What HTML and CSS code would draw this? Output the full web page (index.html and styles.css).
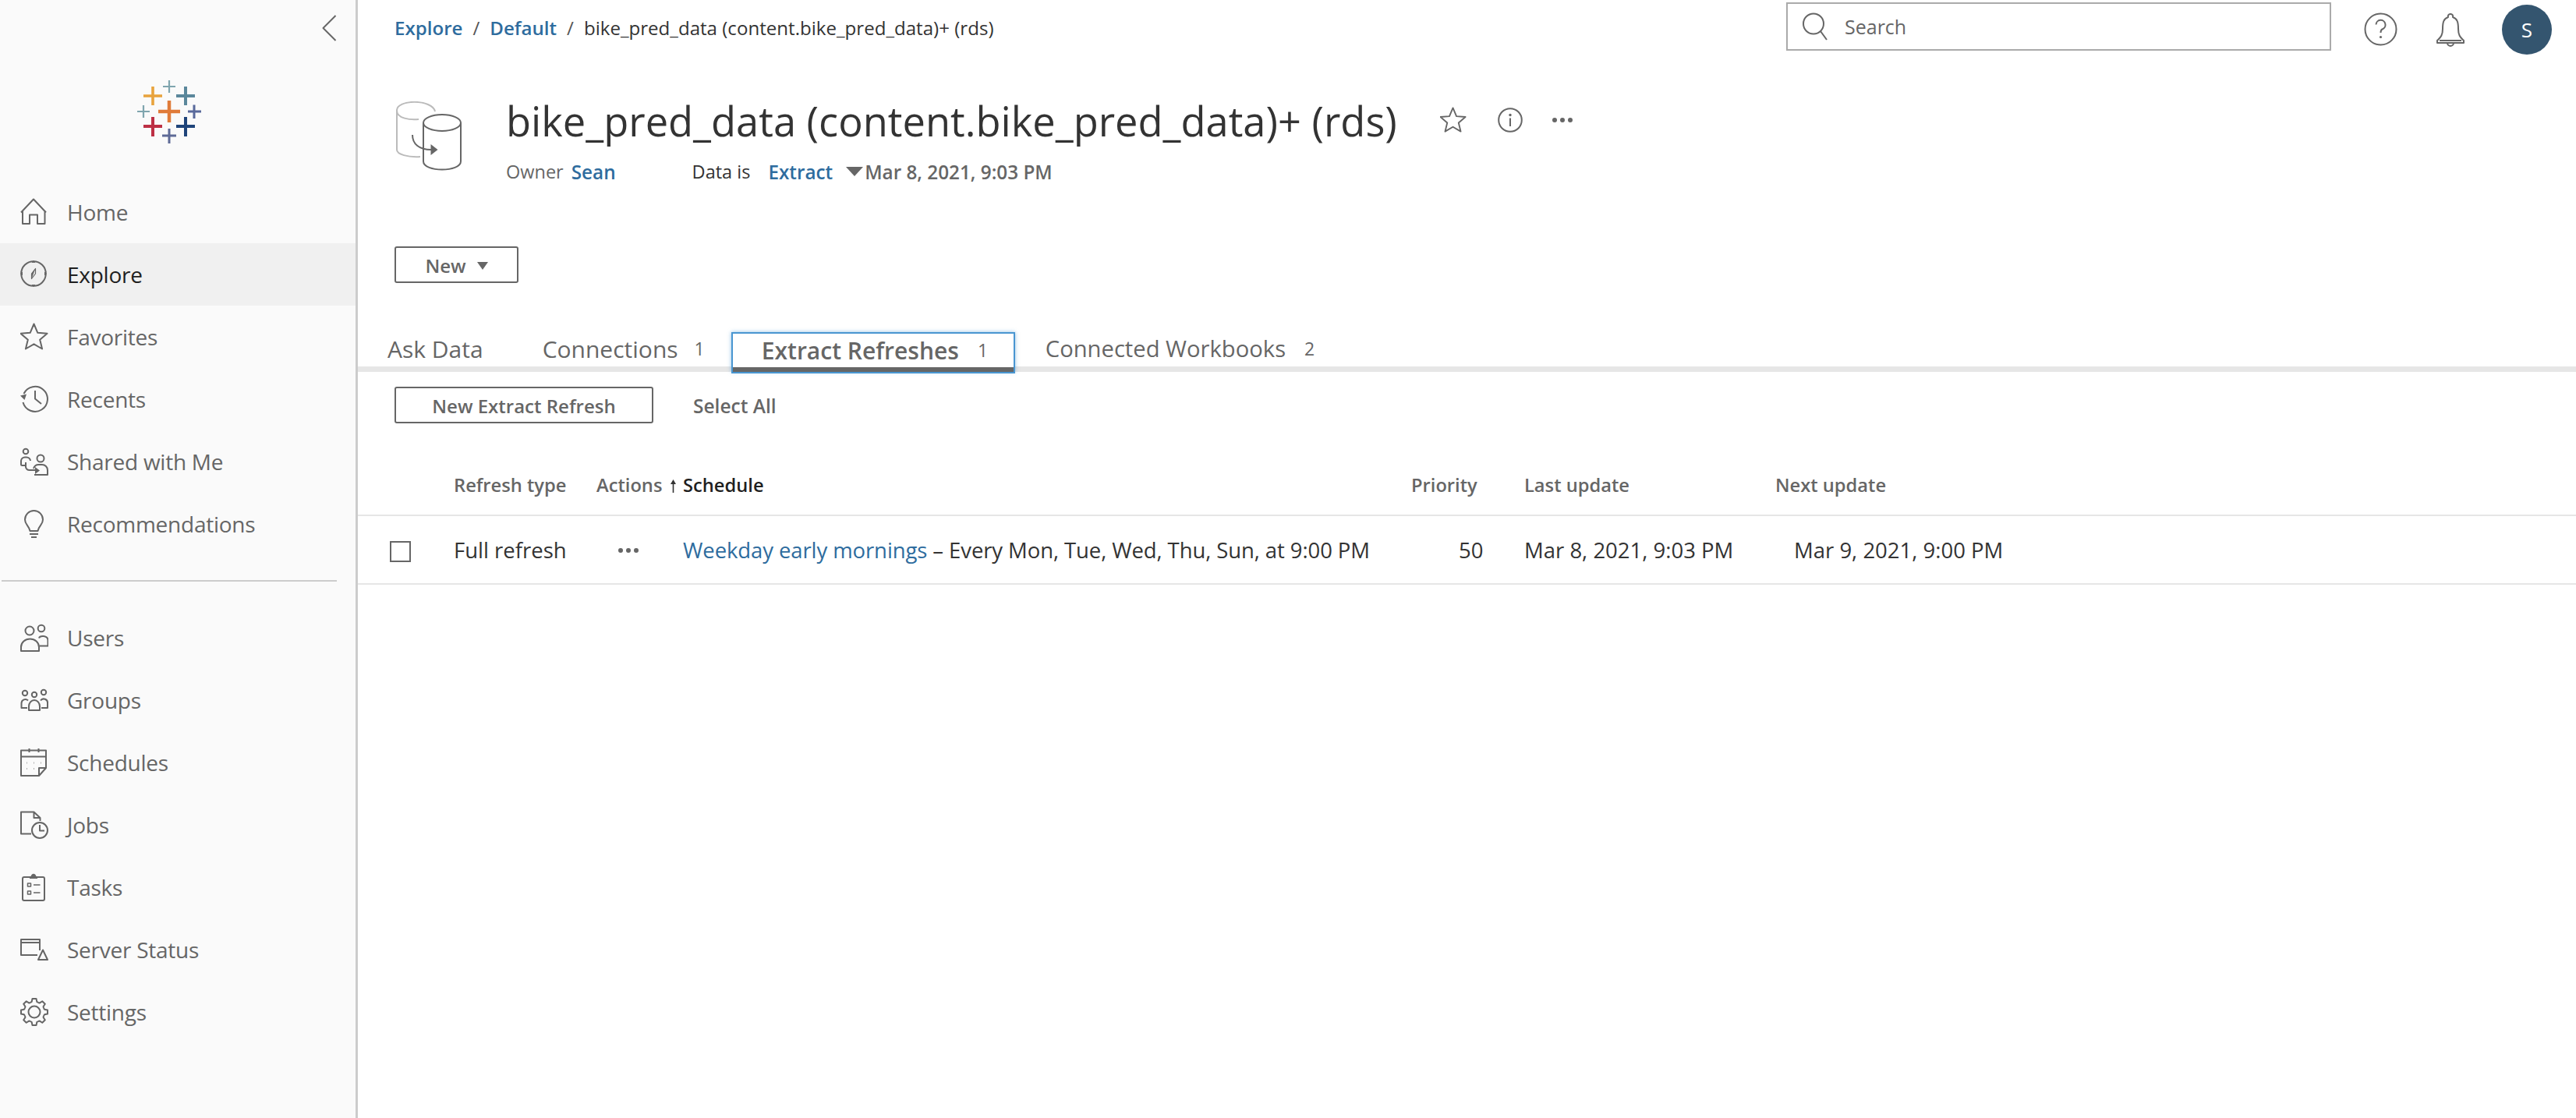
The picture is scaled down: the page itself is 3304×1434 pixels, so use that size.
FILE: index.html
```html
<!DOCTYPE html>
<html lang="en">
<head>
<meta charset="utf-8">
<title>bike_pred_data - Extract Refreshes</title>
<link rel="stylesheet" href="styles.css">
</head>
<body>
<aside class="sidebar">
  <button class="collapse" aria-label="Collapse">
    <svg width="20" height="34" viewBox="0 0 20 34"><path d="M17.5 1 L1.5 17 L17.5 33" class="ln"/></svg>
  </button>
  <svg class="logo" width="95" height="90" viewBox="170 100 95 90">
    <path d="M217 129V157M203 143H231" stroke="#e07b39" stroke-width="4.5"/>
    <path d="M196 111V135M184 123H208" stroke="#e8a33d" stroke-width="3.6"/>
    <path d="M217 103V119M209 111H225" stroke="#7fa5ae" stroke-width="2.2"/>
    <path d="M238 111V135M226 123H250" stroke="#5b879b" stroke-width="4"/>
    <path d="M184 135V151M176 143H192" stroke="#7fa5ae" stroke-width="2.2"/>
    <path d="M249 134.500V152M241 143H258" stroke="#59699b" stroke-width="3"/>
    <path d="M196 150V175M184 162H208" stroke="#bd3045" stroke-width="4"/>
    <path d="M238 150V175M226 162H250" stroke="#1f447a" stroke-width="4"/>
    <path d="M217 165V184M208 174H226" stroke="#5e6a96" stroke-width="3"/>
  </svg>
  <nav class="nav">
    <a class="item">
      <svg class="ic" viewBox="0 0 36 36"><path class="ln" d="M1 18.500L17 1.500L33 18.500M3 16V33H12V21.500H22V33H31.500V16"/></svg>
      <span>Home</span>
    </a>
    <a class="item active">
      <svg class="ic" viewBox="0 0 36 36"><circle class="ln" cx="17" cy="17" r="15.800"/><path class="fl" d="M17 0L19.500 3H14.500ZM17 34L14.500 31H19.500ZM0 17L3 14.500V19.500ZM34 17L31 19.500V14.500Z"/><path class="ln thin" d="M19.500 10.500L19.500 17L14.500 23.500L14.500 17Z"/><path class="fl" d="M14.500 23.500L14.500 17L19.500 10.500Z"/></svg>
      <span>Explore</span>
    </a>
    <a class="item">
      <svg class="ic" viewBox="0 0 36 36"><path class="ln" d="M17.500 1.500L22.300 12.800L34.500 13.800L25.200 21.700L28.100 33.500L17.500 27.300L6.900 33.500L9.800 21.700L0.500 13.800L12.700 12.800Z"/></svg>
      <span>Favorites</span>
    </a>
    <a class="item">
      <svg class="ic" viewBox="0 0 36 36"><path class="ln" d="M4.500 11A16 16 0 1 1 3.500 22"/><path class="fl" d="M0 13.500L8 11.500L5.500 19Z"/><path class="ln" d="M19 7V17.500L27 24"/></svg>
      <span>Recents</span>
    </a>
    <a class="item">
      <svg class="ic" viewBox="0 0 36 36"><circle class="ln" cx="7" cy="5" r="3.300"/><circle class="ln" cx="26" cy="14" r="4.500"/><path class="ln" d="M8 23H2.500A1.500 1.500 0 0 1 1 21.500V17A5 5 0 0 1 6 12.500H8A5 5 0 0 1 13 17M7 19V25A5 5 0 0 0 12 29H22M18 35H35V29A7 7 0 0 0 28 22H24A7 7 0 0 0 17 27"/><path class="fl" d="M19 25L25 29.500L19 34Z"/></svg>
      <span>Shared with Me</span>
    </a>
    <a class="item">
      <svg class="ic" viewBox="0 0 36 36"><path class="ln" d="M12.500 27C11 20 6 19 6 12.500A11.500 11.500 0 0 1 29 12.500C29 19 24 20 22.500 27ZM12 31H23M14 35H21"/></svg>
      <span>Recommendations</span>
    </a>
  </nav>
  <hr class="divider">
  <nav class="nav">
    <a class="item">
      <svg class="ic" viewBox="0 0 36 36"><circle class="ln" cx="12" cy="9" r="5.500"/><circle class="ln" cx="27" cy="6" r="4.300"/><path class="ln" d="M1 35V30A11 10 0 0 1 24 30V35ZM24 18.500C25 15 35 14.500 35.500 21V28.500H25"/></svg>
      <span>Users</span>
    </a>
    <a class="item">
      <svg class="ic" viewBox="0 0 36 36"><circle class="ln" cx="6" cy="9" r="3.200"/><circle class="ln" cx="18" cy="11" r="3.200"/><circle class="ln" cx="30" cy="8" r="3.200"/><path class="ln" d="M11 31V26A7 8 0 0 1 25 26V31ZM9 28H1.500V22A5 5 0 0 1 10 18.500M26 18.500A5 5 0 0 1 35 22V28H27"/></svg>
      <span>Groups</span>
    </a>
    <a class="item">
      <svg class="ic" viewBox="0 0 36 36"><path class="ln" d="M1 2.500H33V25L24 35H1ZM1 10.500H33M11.500 0V5M23.500 0V5M33 25H24V35"/><path class="dots" d="M8.500 18.500H9M17.500 18.500H18M26 18.500H26.500M8.500 26H9M17.500 26H18"/></svg>
      <span>Schedules</span>
    </a>
    <a class="item">
      <svg class="ic" viewBox="0 0 36 36"><path class="ln" d="M14 29.500H1V1.500H17.500L25.500 9H17.500V1.500M25.500 9V13"/><circle class="ln" cx="25" cy="25" r="10"/><path class="ln" d="M25 18V25.500H31"/></svg>
      <span>Jobs</span>
    </a>
    <a class="item">
      <svg class="ic" viewBox="0 0 36 36"><rect class="ln" x="3" y="5" width="28" height="30" rx="2"/><path class="fl" d="M12 7V4.500Q14 4 14.500 2Q17 -0.500 19.500 2Q20 4 22 4.500V7Z"/><path class="ln sm" d="M9.500 13H13.500V17H9.500ZM9.500 23H13.500V27H9.500ZM17 15H25.500M17 25H25.500"/></svg>
      <span>Tasks</span>
    </a>
    <a class="item">
      <svg class="ic" viewBox="0 0 36 36"><path class="ln" d="M25 19V5H1V25H22M1 9H25M29 18.500L35 31H23Z"/></svg>
      <span>Server Status</span>
    </a>
    <a class="item">
      <svg class="ic" viewBox="0 0 36 36">
        <defs><path id="tooth" class="ln" d="M13 6Q13.900 5.500 14.700 4.900L15.500 1H20.500L21.300 4.900Q22.100 5.500 23 6"/></defs>
        <use href="#tooth"/><use href="#tooth" transform="rotate(45 18 18)"/><use href="#tooth" transform="rotate(90 18 18)"/><use href="#tooth" transform="rotate(135 18 18)"/><use href="#tooth" transform="rotate(180 18 18)"/><use href="#tooth" transform="rotate(225 18 18)"/><use href="#tooth" transform="rotate(270 18 18)"/><use href="#tooth" transform="rotate(315 18 18)"/>
        <circle class="ln" cx="18" cy="18" r="7.500"/>
      </svg>
      <span>Settings</span>
    </a>
  </nav>
</aside>

<main class="main">
  <header class="topbar">
    <div class="crumbs">
      <a class="link b">Explore</a><span class="sep">/</span><a class="link b">Default</a><span class="sep">/</span><span class="cur">bike_pred_data (content.bike_pred_data)+ (rds)</span>
    </div>
    <div class="search">
      <svg class="search-ic" width="34" height="36" viewBox="0 0 34 36"><circle class="ln" cx="15" cy="14.500" r="13"/><path class="ln" d="M24 24L32 35"/></svg>
      <span>Search</span>
    </div>
    <svg class="help" width="43" height="43" viewBox="0 0 43 43"><circle class="ln" cx="21.500" cy="21.500" r="20"/><path class="ln" d="M15.500 15.500A6 6 0 1 1 23.500 21.500Q21.500 22.500 21.500 26"/><circle class="fl" cx="21.500" cy="31.500" r="1.600"/></svg>
    <svg class="bell" width="38" height="44" viewBox="0 0 38 44"><path class="ln" d="M19 1A3 3 0 0 1 22 5C28 7 29 12 29 20C29 29 32 31 36 35V38H2V35C6 31 9 29 9 20C9 12 10 7 16 5A3 3 0 0 1 19 1ZM15 38A4 4 0 0 0 23 38M5 35H33"/></svg>
    <div class="avatar">S</div>
  </header>

  <section class="head">
    <svg class="ds-ic" width="84" height="90" viewBox="0 0 84 90">
      <path class="pale" d="M50 13C47 -3 0 -3 1 12C1 22 18 24 29 23M1 12V62C1 68 15 72 31 71"/>
      <ellipse class="ln" cx="59" cy="27.500" rx="24" ry="10.500"/>
      <path class="ln" d="M35 27V77C35 91 83 91 83 77V27"/>
      <path class="ln" d="M21 43C21 55 30 62 45 62"/>
      <path class="fl" d="M44.500 55L53.500 62L44.500 69Z"/>
    </svg>
    <div class="head-text">
      <div class="title-row">
        <h1 class="title">bike_pred_data (content.bike_pred_data)+ (rds)</h1>
        <svg class="t-star" width="34" height="34" viewBox="0 0 36 36"><path class="ln" d="M17.500 1.500L22.300 12.800L34.500 13.800L25.200 21.700L28.100 33.500L17.500 27.300L6.900 33.500L9.800 21.700L0.500 13.800L12.700 12.800Z"/></svg>
        <svg class="t-info" width="32" height="32" viewBox="0 0 32 32"><circle class="ln" cx="16" cy="16" r="14.800"/><circle class="fl" cx="16" cy="9.500" r="1.700"/><path class="ln" d="M16 13.500V24"/></svg>
        <svg class="t-more" width="28" height="8" viewBox="0 0 28 8"><circle class="fl" cx="4" cy="4" r="3"/><circle class="fl" cx="14" cy="4" r="3"/><circle class="fl" cx="24" cy="4" r="3"/></svg>
      </div>
      <div class="meta">
        <span class="m-label">Owner</span><a class="link b m-owner">Sean</a>
        <span class="m-data">Data is</span><a class="link b m-extract">Extract</a>
        <i class="tri-lg"></i><span class="m-date">Mar 8, 2021, 9:03 PM</span>
      </div>
    </div>
  </section>

  <button class="btn btn-new">New <i class="tri-sm"></i></button>

  <div class="tabs">
    <a class="tab t-ask"><span>Ask Data</span></a>
    <a class="tab t-conn"><span>Connections</span><b class="cnt">1</b></a>
    <a class="tab t-active"><span>Extract Refreshes</span><b class="cnt">1</b></a>
    <a class="tab t-work"><span>Connected Workbooks</span><b class="cnt">2</b></a>
  </div>

  <div class="actions">
    <button class="btn btn-refresh">New Extract Refresh</button>
    <a class="select-all">Select All</a>
  </div>

  <div class="grid g-head">
    <span></span>
    <span>Refresh type</span>
    <span class="act">Actions</span>
    <span class="sorted"><svg class="arrow" width="7" height="18" viewBox="0 0 7 18"><path class="fl" d="M3.500 1L7 7H4.300V18H2.700V7H0Z"/></svg>Schedule</span>
    <span>Priority</span>
    <span>Last update</span>
    <span>Next update</span>
  </div>
  <div class="grid g-row">
    <span><i class="check"></i></span>
    <span>Full refresh</span>
    <span><svg class="row-more" width="28" height="8" viewBox="0 0 28 8"><circle class="fl" cx="4" cy="4" r="3"/><circle class="fl" cx="14" cy="4" r="3"/><circle class="fl" cx="24" cy="4" r="3"/></svg></span>
    <span class="sched"><a class="link">Weekday early mornings</a> – Every Mon, Tue, Wed, Thu, Sun, at 9:00 PM</span>
    <span class="num">50</span>
    <span>Mar 8, 2021, 9:03 PM</span>
    <span class="next">Mar 9, 2021, 9:00 PM</span>
  </div>
</main>
</body>
</html>
```
FILE: styles.css
```css
* { box-sizing: border-box; }
html, body { margin: 0; height: 100%; }
body {
  display: flex;
  width: 3304px;
  height: 1434px;
  overflow: hidden;
  background: #fff;
  font-family: "Open Sans", "Liberation Sans", sans-serif;
  font-size: 26px;
  color: #333;
}
a { text-decoration: none; }
svg { display: block; flex: none; }
.ln { fill: none; stroke: #666; stroke-width: 2; stroke-linejoin: round; }
.sm { stroke-width: 1.500; }
.thin { stroke-width: 1.200; }
.fl { fill: #666; stroke: none; }
.pale { fill: none; stroke: #bbb; stroke-width: 2; }
.dots { fill: none; stroke: #666; stroke-width: 2; }

/* Sidebar */
.sidebar {
  width: 459px;
  flex: none;
  background: #fafafa;
  border-right: 3px solid #ccc;
  display: flex;
  flex-direction: column;
}
.collapse {
  align-self: flex-end;
  margin: 19px 23px 0 0;
  padding: 0;
  border: 0;
  background: none;
}
.logo { fill: none; margin: 47px 0 0 170px; }
.nav { display: flex; flex-direction: column; }
.logo + .nav { margin-top: 42px; }
.item {
  height: 80px;
  display: flex;
  align-items: center;
  gap: 24px;
  padding-left: 26px;
  font-size: 28px;
  letter-spacing: -0.25px;
  color: #666;
}
.item.active { background: #f0f0f0; color: #1f1f1f; }
.ic { width: 36px; height: 36px; }
.divider {
  height: 2px;
  margin: 32px 24px 32px 2px;
  border: 0;
  background: #ccc;
}

/* Main */
.main { flex: 1; min-width: 0; display: flex; flex-direction: column; }
.link { color: #2e6c9e; }
.b { font-weight: 600; }
.topbar {
  height: 70px;
  display: flex;
  align-items: center;
  padding-left: 47px;
}
.crumbs { display: flex; align-items: center; font-size: 24.100px; flex: 1; color: #333; }
.sep { margin: 0 13px; color: #555; }
.search {
  width: 699px;
  height: 62px;
  margin: -2px 42px 0 0;
  padding-left: 18px;
  display: flex;
  align-items: center;
  gap: 21px;
  border: 2px solid #aaa;
  font-size: 25px;
  color: #666;
}
.help { margin: 4px 49px 0 0; }
.bell { margin: 8px 47px 0 0; }
.avatar {
  width: 64px;
  height: 64px;
  margin: 6px 31px 0 0;
  border-radius: 50%;
  background: #34556f;
  color: #fff;
  font-size: 26px;
  display: flex;
  align-items: center;
  justify-content: center;
}
.head { display: flex; margin: 58px 0 0 49px; gap: 57px; height: 98px; }
.ds-ic { margin-top: 2px; }
.head-text { display: flex; flex-direction: column; }
.title-row { display: flex; align-items: center; height: 56px; margin-top: -2px; }
.title { margin: 0; font-size: 52.400px; font-weight: 400; color: #333; white-space: nowrap; }
.t-star { margin-left: 55px; }
.t-info { margin-left: 40px; }
.t-more { margin-left: 37px; }
.meta { display: flex; align-items: center; margin-top: 24px; font-size: 24.300px; height: 28px; white-space: nowrap; }
.m-label { color: #666; font-size: 23.500px; }
.m-owner { margin-left: 10px; }
.m-data { margin-left: 98px; color: #333; font-size: 23.500px; }
.m-extract { margin-left: 23px; }
.tri-lg {
  width: 0; height: 0;
  margin: 0 2px 0 17px;
  border-left: 11px solid transparent;
  border-right: 11px solid transparent;
  border-top: 12px solid #666;
}
.m-date { font-weight: 600; color: #666; }

.btn {
  font: inherit;
  font-weight: 600;
  font-size: 24px;
  color: #666;
  background: #fff;
  border: 2px solid #666;
  border-radius: 3px;
  padding: 2px 0 0;
  height: 47px;
}
.btn-new {
  width: 159px;
  margin: 90px 0 0 47px;
  display: flex;
  align-items: center;
  justify-content: center;
  gap: 14px;
}
.tri-sm {
  width: 0; height: 0;
  border-left: 7px solid transparent;
  border-right: 7px solid transparent;
  border-top: 10px solid #666;
}
.tabs {
  height: 51px;
  margin-top: 63px;
  display: flex;
  align-items: flex-start;
  box-shadow: inset 0 -7px 0 #e6e6e6;
  font-size: 30px;
  color: #666;
}
.tab { display: flex; height: 42px; align-items: center; white-space: nowrap; }
.cnt { font-weight: 400; font-size: 23px; margin-left: 24px; }
.t-ask { margin-left: 38px; }
.t-conn { margin-left: 76px; }
.t-conn .cnt { margin-left: 21px; }
.t-active {
  width: 364px;
  height: 51px;
  margin-left: 34px;
  padding: 0 0 7px 37px;
  border: 2px solid #4996d1;
  border-bottom: 0;
  box-shadow: 0 0 5px rgba(73,150,209,.6), inset 0 -6px 0 #666, 0 2px 0 #4996d1;
  background: #fff;
  font-weight: 600;
}
.t-work { margin-left: 39px; font-size: 29.200px; }

.actions { display: flex; align-items: center; margin: 19px 0 0 47px; }
.btn-refresh { width: 332px; }
.select-all { margin: 2px 0 0 51px; font-weight: 600; font-size: 24.500px; color: #666; }

.grid {
  display: grid;
  grid-template-columns: 123px 181px 113px 934px 145px 322px 1fr;
  align-items: center;
  white-space: nowrap;
}
.g-head {
  height: 119px;
  padding-top: 41px;
  font-size: 23.700px;
  font-weight: 600;
  color: #666;
  border-bottom: 2px solid #e6e6e6;
}
.act { padding-left: 2px; }
.sorted { position: relative; color: #1f1f1f; }
.arrow { position: absolute; left: -16px; top: 8px; }
.arrow .fl { fill: #333; }
.g-row {
  height: 88px;
  font-size: 27.500px;
  color: #333;
  border-bottom: 2px solid #e6e6e6;
}
.check {
  display: block;
  width: 27px;
  height: 27px;
  margin: 4px 0 0 41px;
  background: #fff;
  border: 2px solid #666;
}
.row-more { margin-left: 29px; margin-top: 2px; }
.sched { letter-spacing: -0.1px; }
.num { padding-left: 61px; }
.next { padding-left: 24px; }
```
